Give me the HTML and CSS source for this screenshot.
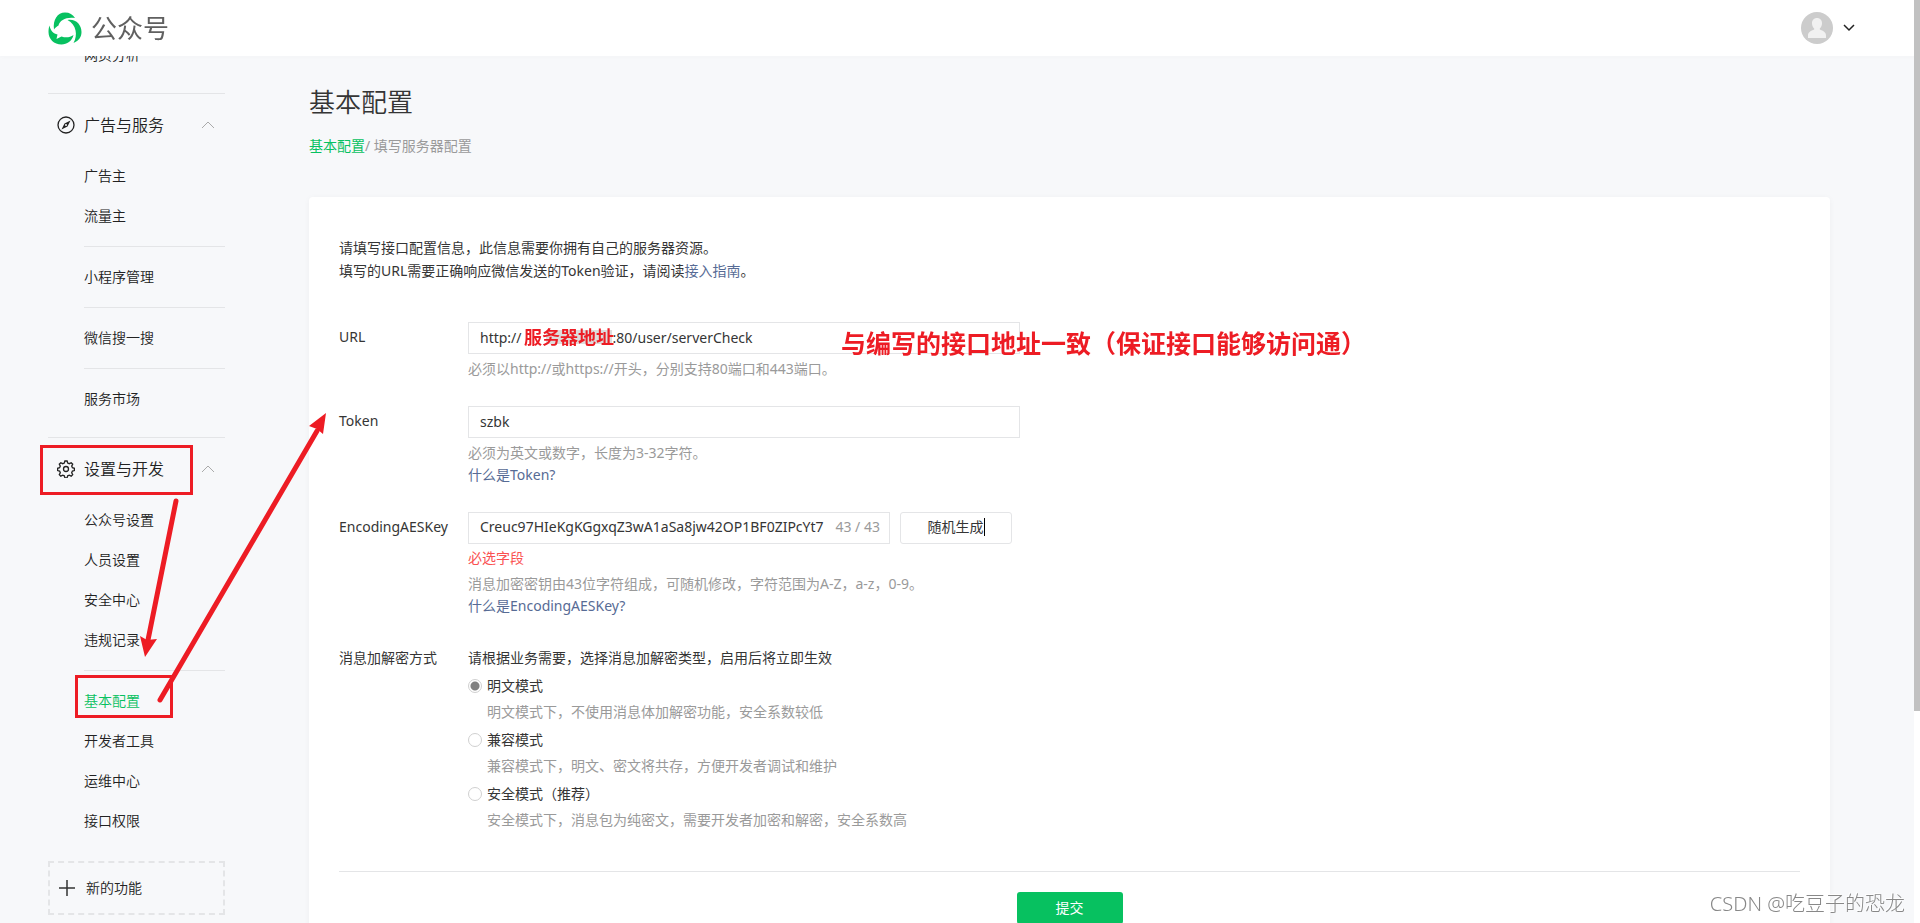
FILE: index.html
```html
<!DOCTYPE html>
<html lang="zh-CN">
<head>
<meta charset="utf-8">
<title>公众号</title>
<link rel="stylesheet" href="styles.css">
</head>
<body>
<header class="header">
  <a class="brand" href="#">
    <svg class="brand-logo" viewBox="0 0 34 33" aria-hidden="true">
      <path d="M6 17.500 C4.500 8 9.500 0.500 17 0.500 C21.500 0.500 25 2.500 27 6 C19 4.500 11.500 8 10.500 13.500 C9 14.500 7 15.500 6 17.500 Z"/>
      <path d="M19.500 8 C27.500 6.500 33.500 12.500 33.500 20 C33.500 25 31 28.500 25.500 31 C30 23 28.500 13 19.500 8 Z"/>
      <path d="M1.500 13.500 C2.500 19 5.500 21.500 9.500 22.500 L8.500 27 L13.500 24.500 C18 26 22 25.500 25.500 23 C24 29 19 32.500 13.500 32.500 C6 32.500 0.500 27 0.500 20 C0.500 17.500 0.800 15.500 1.500 13.500 Z"/>
    </svg>
    <span class="brand-name">公众号</span>
  </a>
  <button class="account" type="button" aria-label="账号">
    <svg class="avatar" viewBox="0 0 32 32" aria-hidden="true">
      <circle cx="16" cy="16" r="16" fill="#ccc"/>
      <path d="M16 6c3 0 5 2.200 5 5.200 0 2-.8 4-2.200 5.200v1.200c3.200 1 6.200 2.900 6.200 5.900V26H7v-2.500c0-3 3-4.900 6.200-5.900v-1.200C11.800 15.200 11 13.200 11 11.200 11 8.200 13 6 16 6z" fill="#f1f1f1"/>
    </svg>
    <svg class="account-arrow" viewBox="0 0 12 8" aria-hidden="true"><path d="M1 1l5 5 5-5"/></svg>
  </button>
</header>

<div class="layout">
  <nav class="sidebar">
    <section class="menu">
      <a class="menu-item" href="#">网页分析</a>
    </section>
    <section class="menu">
      <h2 class="menu-title">
        <svg class="menu-icon" viewBox="0 0 18 18" aria-hidden="true"><circle cx="9" cy="9" r="8"/><path class="solid" d="M13.500 4.500l-3 6-6 3 3-6z"/><circle class="hole" cx="9" cy="9" r="1"/></svg>
        <span>广告与服务</span>
        <svg class="menu-arrow" viewBox="0 0 14 8" aria-hidden="true"><path d="M1 7l6-6 6 6"/></svg>
      </h2>
      <a class="menu-item" href="#">广告主</a>
      <a class="menu-item" href="#">流量主</a>
      <hr class="menu-rule">
      <a class="menu-item" href="#">小程序管理</a>
      <hr class="menu-rule">
      <a class="menu-item" href="#">微信搜一搜</a>
      <hr class="menu-rule">
      <a class="menu-item" href="#">服务市场</a>
    </section>
    <section class="menu">
      <h2 class="menu-title">
        <svg class="menu-icon" viewBox="0 0 18 18" aria-hidden="true"><path d="M7.900 1h2.200l.6 2 1.600.7 1.900-1 1.500 1.500-1 1.900.7 1.600 2 .6v2.200l-2 .6-.7 1.600 1 1.900-1.500 1.500-1.900-1-1.600.7-.6 2H7.900l-.6-2-1.600-.7-1.900 1-1.500-1.500 1-1.900-.7-1.600-2-.6V8.300l2-.6.7-1.600-1-1.900 1.500-1.500 1.900 1L7.300 3z"/><circle cx="9" cy="9" r="2.500"/></svg>
        <span>设置与开发</span>
        <svg class="menu-arrow" viewBox="0 0 14 8" aria-hidden="true"><path d="M1 7l6-6 6 6"/></svg>
      </h2>
      <a class="menu-item" href="#">公众号设置</a>
      <a class="menu-item" href="#">人员设置</a>
      <a class="menu-item" href="#">安全中心</a>
      <a class="menu-item" href="#">违规记录</a>
      <hr class="menu-rule">
      <a class="menu-item current" href="#">基本配置</a>
      <a class="menu-item" href="#">开发者工具</a>
      <a class="menu-item" href="#">运维中心</a>
      <a class="menu-item" href="#">接口权限</a>
    </section>
    <button class="new-feature" type="button">
      <svg class="plus" viewBox="0 0 16 16" aria-hidden="true"><path d="M8 0v16M0 8h16"/></svg>
      <span>新的功能</span>
    </button>
  </nav>

  <main class="main">
    <h1 class="page-title">基本配置</h1>
    <p class="crumbs"><a href="#">基本配置</a>/ 填写服务器配置</p>

    <form class="card">
      <p class="intro">请填写接口配置信息，此信息需要你拥有自己的服务器资源。<br>填写的URL需要正确响应微信发送的Token验证，请阅读<a class="link" href="#">接入指南</a>。</p>

      <div class="field">
        <label class="field-label" for="url">URL</label>
        <div class="field-body">
          <input class="text-input" id="url" type="text" value="http://&emsp;&emsp;&emsp;&emsp;&emsp;&emsp;&ensp;:80/user/serverCheck">
          <p class="hint">必须以http://或https://开头，分别支持80端口和443端口。</p>
        </div>
      </div>

      <div class="field">
        <label class="field-label" for="token">Token</label>
        <div class="field-body">
          <input class="text-input" id="token" type="text" value="szbk">
          <p class="hint">必须为英文或数字，长度为3-32字符。</p>
          <a class="link help" href="#">什么是Token?</a>
        </div>
      </div>

      <div class="field">
        <label class="field-label" for="aes">EncodingAESKey</label>
        <div class="field-body">
          <div class="key-row">
            <div class="counted">
              <input class="counted-input" id="aes" type="text" value="Creuc97HIeKgKGgxqZ3wA1aSa8jw42OP1BF0ZIPcYt7">
              <span class="counter">43 / 43</span>
            </div>
            <button class="random" type="button">随机生成<span class="caret"></span></button>
          </div>
          <p class="error">必选字段</p>
          <p class="hint">消息加密密钥由43位字符组成，可随机修改，字符范围为A-Z，a-z，0-9。</p>
          <a class="link help" href="#">什么是EncodingAESKey?</a>
        </div>
      </div>

      <div class="field modes" role="radiogroup" aria-labelledby="mode-label">
        <span class="field-label" id="mode-label">消息加解密方式</span>
        <div class="field-body">
          <p class="modes-intro">请根据业务需要，选择消息加解密类型，启用后将立即生效</p>
          <label class="mode"><input class="radio" type="radio" name="mode" checked>明文模式</label>
          <p class="mode-hint">明文模式下，不使用消息体加解密功能，安全系数较低</p>
          <label class="mode"><input class="radio" type="radio" name="mode">兼容模式</label>
          <p class="mode-hint">兼容模式下，明文、密文将共存，方便开发者调试和维护</p>
          <label class="mode"><input class="radio" type="radio" name="mode">安全模式（推荐）</label>
          <p class="mode-hint">安全模式下，消息包为纯密文，需要开发者加密和解密，安全系数高</p>
        </div>
      </div>

      <div class="actions"><button class="submit" type="submit">提交</button></div>
    </form>
  </main>
</div>

<div class="notes">
  <span class="blot"></span>
  <svg class="marks" aria-hidden="true">
    <rect x="41.500" y="446.500" width="150" height="47"/>
    <rect x="76.500" y="676.500" width="95" height="40"/>
    <path class="shaft" d="M176 501L148 640M160 700L317 431"/>
    <path class="head" d="M145 657l-5-21 7 4 10-1zM326 413l-17 13 8 3 6 5z"/>
  </svg>
  <span class="note note-host">服务器地址</span>
  <span class="note note-path">与编写的接口地址一致（保证接口能够访问通）</span>
  <span class="watermark">CSDN @吃豆子的恐龙</span>
</div>
<div class="scrollbar"><div class="thumb"></div></div>
</body>
</html>
```

FILE: styles.css
```css
* { box-sizing: border-box; margin: 0; padding: 0; }

body {
  height: 100vh;
  overflow: hidden;
  background: #f7f8fa;
  color: #353535;
  font: 14px/22px "Noto Sans", "Noto Sans CJK SC", sans-serif;
}

a { color: inherit; text-decoration: none; }
button, input { font: inherit; color: inherit; }
svg { display: block; flex: none; }

.header {
  position: fixed;
  inset: 0 0 auto;
  z-index: 2;
  height: 56px;
  padding: 0 65px 0 48px;
  display: flex;
  align-items: center;
  justify-content: space-between;
  background: #fff;
  box-shadow: 0 1px 4px rgba(0, 0, 0, .02);
}
.brand { display: flex; align-items: center; gap: 9px; }
.brand-logo { width: 34px; height: 33px; fill: #07c160; }
.brand-name { font-size: 26px; line-height: 34px; color: #606060; }
.account { display: flex; align-items: center; gap: 10px; border: 0; background: none; }
.avatar { width: 32px; height: 32px; }
.account-arrow { width: 12px; height: 8px; fill: none; stroke: #222; stroke-width: 1.500; }

.layout { display: flex; }

.sidebar { width: 225px; flex: none; padding: 35px 0 0 48px; color: #222; font-weight: 350; }
.menu { padding-bottom: 18px; }
.menu + .menu { border-top: 1px solid #e4e5e7; }
.menu-title {
  height: 62px;
  padding: 0 10px 0 9px;
  display: flex;
  align-items: center;
  gap: 9px;
  font-size: 16px;
  font-weight: 350;
}
.menu-icon { width: 18px; height: 18px; fill: none; stroke: #222; stroke-width: 1.300; }
.menu-icon .solid { fill: #222; stroke: none; }
.menu-icon .hole { fill: #f7f8fa; stroke: none; }
.menu-arrow { width: 14px; height: 8px; margin-left: auto; fill: none; stroke: #aaa; }
.menu-item { display: block; padding-left: 36px; line-height: 40px; }
.menu-item.current { color: #07c160; }
.menu-rule { margin: 10px 0 10px 36px; border: 0; border-top: 1px solid #e4e5e7; }
.new-feature {
  width: 100%;
  height: 54px;
  margin-top: 2px;
  padding: 0 9px;
  display: flex;
  align-items: center;
  gap: 11px;
  border: 2px dashed #e4e5e7;
  background: none;
}
.plus { width: 16px; height: 16px; fill: none; stroke: #333; stroke-width: 1.500; }

.main { flex: 1; padding: 85px 90px 0 84px; }
.page-title { font-size: 26px; line-height: 34px; font-weight: 350; }
.crumbs { margin: 16px 0 40px; color: #9a9a9a; }
.crumbs a { color: #07c160; }

.card {
  padding: 39px 30px 40px;
  border-radius: 4px;
  background: #fff;
  box-shadow: 0 1px 6px rgba(0, 0, 0, .04);
}
.intro { margin-bottom: 40px; line-height: 23px; }
.link { color: #576b95; }

.field { display: flex; margin-bottom: 26px; }
.field-label { width: 129px; flex: none; line-height: 30px; }
.text-input {
  display: block;
  width: 552px;
  height: 32px;
  padding: 0 11px 2px;
  border: 1px solid #e4e5e7;
  background: #fff;
}
.hint { margin-top: 4px; color: #9a9a9a; }
.help { display: block; width: max-content; }
.key-row { display: flex; gap: 10px; }
.counted {
  width: 422px;
  height: 32px;
  padding: 0 9px 2px 11px;
  display: flex;
  align-items: center;
  border: 1px solid #e4e5e7;
}
.counted-input { flex: 1; min-width: 0; border: 0; outline: 0; background: none; }
.counter { color: #9a9a9a; }
.random {
  width: 112px;
  height: 32px;
  padding-bottom: 2px;
  display: flex;
  align-items: center;
  justify-content: center;
  border: 1px solid #e4e5e7;
  border-radius: 3px;
  background: #fff;
}
.caret { width: 1px; height: 18px; background: #000; }
.error { margin-top: 3px; color: #fa5151; }

.modes { padding-top: 4px; margin-bottom: 40px; }
.modes .field-label { line-height: 22px; }
.mode { display: flex; align-items: center; gap: 5px; width: max-content; margin-top: 6px; }
.mode-hint { margin: 4px 0 0 19px; color: #9a9a9a; }
.radio {
  appearance: none;
  width: 14px;
  height: 14px;
  border: 1px solid #d0d0d0;
  border-radius: 50%;
  background: #fff;
}
.radio:checked { background: radial-gradient(circle, #808080 0 4px, #fff 5px); }

.actions { padding-top: 20px; border-top: 1px solid #e4e5e7; text-align: center; }
.submit {
  width: 106px;
  height: 32px;
  border: 0;
  border-radius: 3px;
  background: #07c160;
  color: #fff;
}

.notes { position: fixed; inset: 0; z-index: 3; pointer-events: none; }
.marks { position: absolute; inset: 0; width: 100%; height: 100%; fill: none; stroke: #ed1c24; stroke-width: 3; }
.marks .shaft { stroke-width: 5; stroke-linecap: round; }
.marks .head { fill: #ed1c24; stroke: none; }
.note { position: absolute; color: #ed1c24; font-weight: 700; white-space: nowrap; }
.note-host { left: 524px; top: 325px; font-size: 18px; line-height: 24px; }
.note-path { left: 841px; top: 327px; font-size: 25px; line-height: 32px; }
.blot { position: absolute; left: 546px; top: 330px; width: 66px; height: 14px; background: #ddd; }
.watermark {
  position: absolute;
  right: 15px;
  bottom: 5px;
  color: #888;
  font-size: 20px;
  line-height: 28px;
  font-weight: 300;
  text-shadow: -1px -1px 0 #fff;
}
.scrollbar { position: fixed; inset: 0 0 0 auto; z-index: 4; width: 6px; background: #fff; }
.thumb { height: 77%; background: #c1c1c1; }
```
